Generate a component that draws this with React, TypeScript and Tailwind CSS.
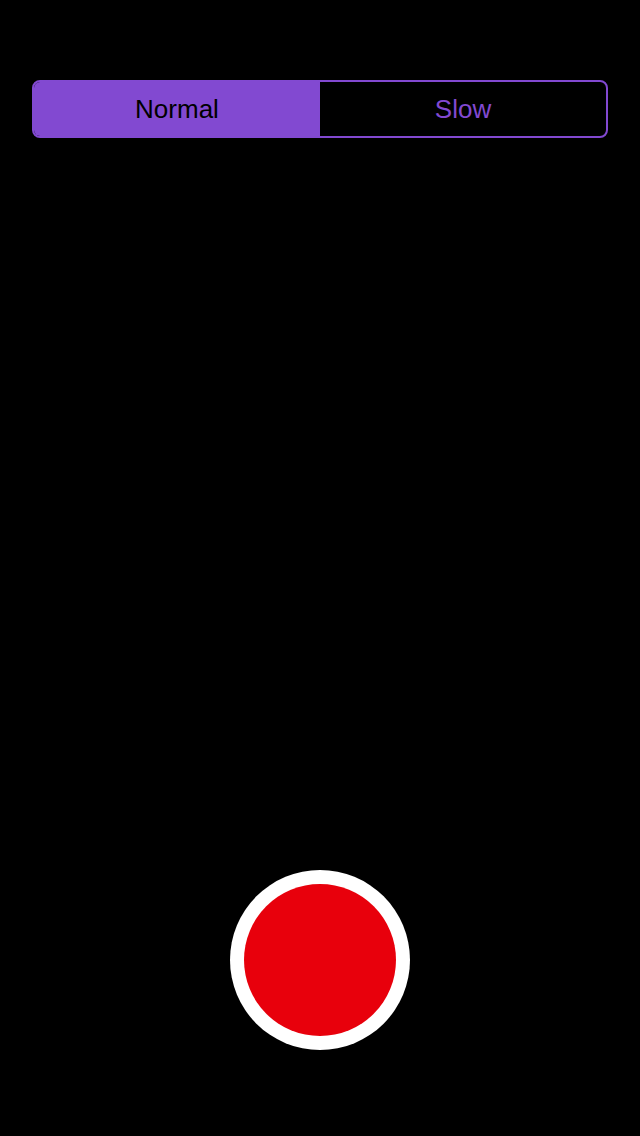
export default function App() {
  return (
    <main
      className="h-[1136px] w-[640px] bg-black flex flex-col px-[32px] pt-[80px] pb-[86px]"
      style={{ fontFamily: '"Liberation Sans", Arial, sans-serif' }}
    >
      {/* Speed toggle */}
      <div className="flex h-[58px] rounded-[8px] border-2 border-[#8249d1] overflow-hidden">
        <div className="flex-1 bg-[#8249d1] flex items-center justify-center text-[26px] text-black">
          Normal
        </div>
        <div className="flex-1 flex items-center justify-center text-[26px] text-[#8249d1]">
          Slow
        </div>
      </div>

      <div className="flex-1" />

      {/* Record button */}
      <div className="flex justify-center">
        <div className="w-[180px] h-[180px] rounded-full bg-white flex items-center justify-center">
          <div className="w-[152px] h-[152px] rounded-full bg-[#e8000c]" />
        </div>
      </div>
    </main>
  );
}
